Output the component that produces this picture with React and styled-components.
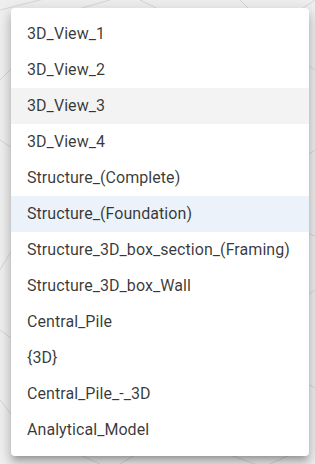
import styled, { createGlobalStyle } from "styled-components";

const views = [
  "3D_View_1",
  "3D_View_2",
  "3D_View_3",
  "3D_View_4",
  "Structure_(Complete)",
  "Structure_(Foundation)",
  "Structure_3D_box_section_(Framing)",
  "Structure_3D_box_Wall",
  "Central_Pile",
  "{3D}",
  "Central_Pile_-_3D",
  "Analytical_Model",
];

const HOVERED = 2;
const SELECTED = 5;

const GlobalStyle = createGlobalStyle`
  html, body {
    margin:0;
    padding:0;
    background:#efefef;
  }
  body {
    font-family: Roboto, "Noto Sans", sans-serif;
  }
`;

const Page = styled.div`
  position:relative;
  width:315px;
  height:464px;
  overflow:hidden;
  background:#efefef;
  padding:8px 6px 0 11px;
  box-sizing:border-box;
`;

const Backdrop = styled.svg`
  position:absolute;
  inset:0;
`;

const Menu = styled.ul`
  position:relative;
  list-style:none;
  margin:0;
  padding:8px 0;
  width:298px;
  background:#fff;
  border-radius:4px;
  box-shadow: 0px 5px 5px -3px rgba(0,0,0,0.2), 0px 8px 10px 1px rgba(0,0,0,0.14), 0px 3px 14px 2px rgba(0,0,0,0.12);
`;

const Item = styled.li`
  height:36px;
  box-sizing:border-box;
  padding:6px 16px;
  font-size:16px;
  line-height:24px;
  letter-spacing:0.06px;
  color:rgba(0,0,0,0.78);
  white-space:nowrap;
  background: ${(props) => props.$selected ? "#ebf2fa" : props.$hovered ? "#f3f3f3" : "transparent"};
`;

const lines = [
  [0, 10, 60, -5], [40, 20, 110, 0], [140, 0, 180, 20], [190, 10, 250, 30],
  [240, 0, 270, 30], [300, 10, 315, 0], [0, 80, 20, 60], [0, 140, 15, 150],
  [0, 270, 12, 250], [0, 330, 14, 340], [0, 400, 16, 420], [300, 60, 315, 70],
  [300, 160, 315, 150], [300, 230, 315, 236], [300, 300, 315, 290], [300, 380, 315, 388],
  [80, 455, 100, 464], [120, 464, 135, 455], [230, 455, 255, 464], [270, 464, 290, 455],
];

function App() {
  return (
    <>
      <GlobalStyle />
      <Page>
        <Backdrop width="315" height="464">
          {lines.map(([x1, y1, x2, y2], i) => (
            <line key={i} x1={x1} y1={y1} x2={x2} y2={y2} stroke="#d6d6d6" strokeWidth="1" />
          ))}
        </Backdrop>
        <Menu>
          {views.map((name, i) => (
            <Item key={name} $hovered={i === HOVERED} $selected={i === SELECTED}>
              {name}
            </Item>
          ))}
        </Menu>
      </Page>
    </>
  );
}

export default App;
